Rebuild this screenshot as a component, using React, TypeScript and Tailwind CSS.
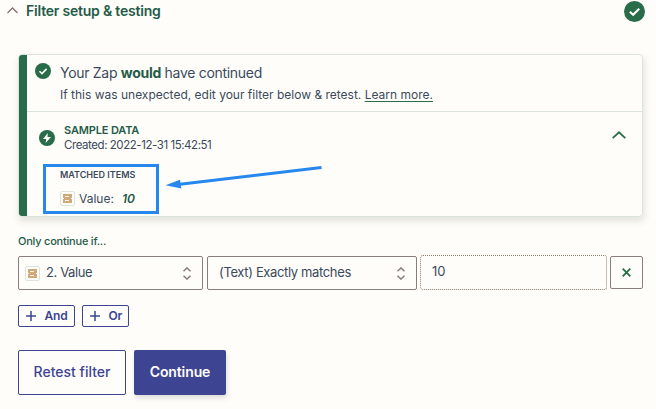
import React from 'react';

function CheckBadge({ className }: { className: string }) {
  return (
    <svg viewBox="0 0 20 20" className={className}>
      <circle cx="10" cy="10" r="10" fill="#286c49" />
      <path d="M5.6 10.3 8.7 13.2 14.5 7.4" fill="none" stroke="#fffdf9" strokeWidth="2" />
    </svg>
  );
}

function ValueIcon() {
  return (
    <span className="flex size-[15px] shrink-0 items-center justify-center rounded-[2px] border border-[#dde3de]">
      <svg viewBox="0 0 9 9" className="size-[9px]" shapeRendering="crispEdges">
        <path d="M0 0h9v4H8v1h1v4H0V5h1V4H0z" fill="#d3a878" />
        <path d="M2 2h4v1H2zM2 6h4v1H2z" fill="#fffdf9" />
      </svg>
    </span>
  );
}

function Sorter() {
  return (
    <svg viewBox="0 0 8 13" className="h-[13px] w-2 shrink-0" fill="none" stroke="#8a7d78" strokeWidth="1.5">
      <path d="M.5 4.2 4 .9l3.500 3.300M.5 8.800 4 12.100l3.500-3.300" />
    </svg>
  );
}

function SmallButton({ label, className }: { label: string; className: string }) {
  return (
    <button className={`flex h-[22px] items-center rounded-[2px] border border-[#3d4592] pl-[7px] text-[12px] font-semibold tracking-[-0.2px] text-[#3d4592] ${className}`}>
      <svg viewBox="0 0 10 10" className="mr-[8.5px] size-[10px]" stroke="#3d4592" strokeWidth="1.500">
        <path d="M5 0v10M0 5h10" />
      </svg>
      {label}
    </button>
  );
}

export default function App() {
  return (
    <div className="relative h-[409px] w-[656px] overflow-hidden bg-[#fffdf9] font-['Inter',sans-serif] text-[#3a4a5c]">
      <header className="flex h-[54px] items-start pl-[7px] pr-[11px]">
        <svg viewBox="0 0 11 7" className="mt-[7px] h-[7px] w-[11px]" fill="none" stroke="#81736e" strokeWidth="1.300">
          <path d="M.5 6 5.500 1l5 5" />
        </svg>
        <h1 className="ml-2 mt-px text-[14px] leading-5 font-semibold tracking-[-0.21px] whitespace-nowrap text-[#245b49]">Filter setup &amp; testing</h1>
        <CheckBadge className="ml-auto mt-px size-[21px]" />
      </header>

      <section className="ml-[18px] flex h-[163px] w-[625px] overflow-hidden rounded-[4px] border border-[#dce3df] shadow-[1px_4px_6px_1px_rgba(65,80,65,0.13)]">
        <div className="w-2 shrink-0 bg-[#286c49]" />
        <div className="flex flex-1 flex-col">
          <div className="flex h-[57px] border-b border-[#dce3df] pl-2">
            <CheckBadge className="mt-2 size-4" />
            <div className="ml-[9px]">
              <p className="mt-2 text-[14px] leading-5 tracking-[-0.3px] whitespace-nowrap">Your Zap <b className="font-bold text-[#245b49]">would</b> have continued</p>
              <p className="mt-[3px] text-[12px] leading-[18px] whitespace-nowrap">If this was unexpected, edit your filter below &amp; retest. <span className="underline decoration-[#286c49] underline-offset-2">Learn more.</span></p>
            </div>
          </div>
          <div className="flex h-[40px] items-start pl-3 pr-[16px]">
            <svg viewBox="0 0 16 16" className="mt-[18px] size-4">
              <circle cx="8" cy="8" r="8" fill="#286c49" />
              <path d="M8.800 3 4 9h3.200L6.600 13 12 7H8.500z" fill="#fffdf9" />
            </svg>
            <div className="ml-[9px] mt-[11px] leading-[15px] whitespace-nowrap">
              <p className="text-[11px] font-semibold tracking-[-0.15px] text-[#245b49]">SAMPLE DATA</p>
              <p className="text-[11.500px] tracking-[-0.44px]">Created: 2022-12-31 15:42:51</p>
            </div>
            <svg viewBox="0 0 14 8" className="ml-auto mt-[19px] h-2 w-[14px]" fill="none" stroke="#286c49" strokeWidth="1.800">
              <path d="M.7 7.200 7 1.300l6.300 5.900" />
            </svg>
          </div>
          <div className="mt-[12px] ml-[16px] flex h-[50px] w-[116px] flex-col border-[3px] border-[#2687ee] pl-[14px]">
            <p className="mt-[2px] text-[9px] leading-3 font-semibold whitespace-nowrap">MATCHED ITEMS</p>
            <div className="mt-[8px] flex items-center text-[12px] leading-[18px] whitespace-nowrap">
              <ValueIcon />
              <span className="ml-1 pt-px">Value:</span>
              <i className="ml-[8px] pt-px font-semibold text-[#245b49]">10</i>
            </div>
          </div>
        </div>
      </section>

      <svg viewBox="0 0 160 26" className="absolute left-[164px] top-[164px] h-[26px] w-[160px]">
        <path d="M157.500 3.500 14 20.500" stroke="#2687ee" strokeWidth="3" />
        <path d="M1.500 21.300 16 15.800 17.300 24.500z" fill="#2687ee" />
      </svg>

      <main className="pl-[18px]">
        <p className="mt-[17px] text-[11px] leading-[15px] font-medium tracking-[-0.22px] whitespace-nowrap text-[#245b49]">Only continue if...</p>
        <div className="mt-[6px] flex h-[35px] items-end text-[13px] whitespace-nowrap">
          <div className="flex h-[34px] w-[185px] items-center justify-between rounded-[2px] border border-[#8a7d7b] pl-[6px] pr-[11px]">
            <div className="flex items-center"><ValueIcon /><span className="ml-[6px] tracking-[-0.4px]">2. Value</span></div>
            <Sorter />
          </div>
          <div className="ml-1 flex h-[34px] w-[210px] items-center justify-between rounded-[2px] border border-[#8a7d7b] pl-[11px] pr-[11px]">
            <span className="tracking-[-0.36px]">(Text) Exactly matches</span>
            <Sorter />
          </div>
          <div className="ml-[3px] flex h-[35px] w-[187px] items-center rounded-[3px] border border-dotted border-[#927b68] pb-px pl-[11px]">10</div>
          <div className="mb-px ml-[3px] flex size-[33px] items-center justify-center rounded-[2px] border border-[#8a7d7b]">
            <svg viewBox="0 0 9 9" className="size-[9px]" stroke="#286c49" strokeWidth="1.800">
              <path d="m.7.7 7.600 7.600M8.300.7.7 8.300" />
            </svg>
          </div>
        </div>
        <div className="mt-[15px] flex">
          <SmallButton label="And" className="w-[57px]" />
          <SmallButton label="Or" className="ml-[7px] w-[47px]" />
        </div>
        <div className="mt-[23px] flex text-[14px]">
          <button className="h-[45px] w-[108px] rounded-[2px] border border-[#3d4592] pb-0.5 font-medium whitespace-nowrap text-[#3d4592]">Retest filter</button>
          <button className="ml-2 h-[45px] w-[92px] rounded-[2px] bg-[#3d4592] pb-0.5 font-semibold tracking-[-0.1px] whitespace-nowrap text-[#fffdf9] shadow-[1px_3px_5px_rgba(65,80,65,0.18)]">Continue</button>
        </div>
      </main>
    </div>
  );
}
